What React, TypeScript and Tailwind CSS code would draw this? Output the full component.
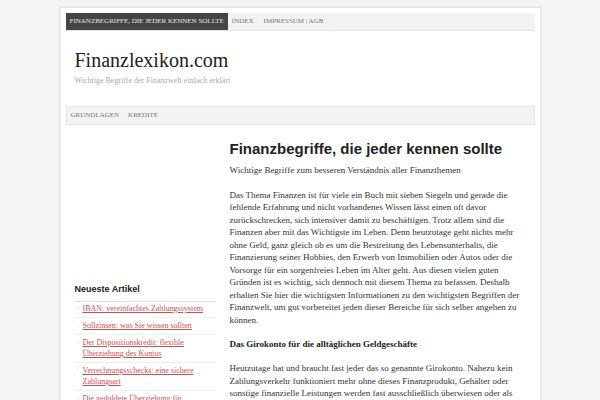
export default function App() {
  const topNav = ['Index', 'Impressum | AGB']
  const catNav = ['Grundlagen', 'Kredite']
  const articles = [
    'IBAN: vereinfachtes Zahlungssystem',
    'Sollzinsen: was Sie wissen sollten',
    'Der Dispositionskredit: flexible Überziehung des Kontos',
    'Verrechnungsschecks: eine sichere Zahlungsart',
    'Die geduldete Überziehung für Girokonten',
  ]

  return (
    <div className="min-h-[400px] bg-[#f4f4f4] pt-[6px] font-['Liberation_Serif',serif]">
      <div className="mx-auto w-[483px] border-2 border-[#e8e8e8] bg-white p-[5px]">
        {/* Top Nav */}
        <div className="flex h-[18px] items-stretch border-b border-[#e4e4e4] bg-[#f2f2f2] text-[7px] uppercase">
          <a className="flex items-center bg-[#454545] px-[4px] text-[#e6e6e6]">
            Finanzbegriffe, die jeder kennen sollte
          </a>
          <div className="flex items-center gap-[10px] pl-[4px] text-[#777]">
            {topNav.map((item) => (
              <a key={item}>{item}</a>
            ))}
          </div>
        </div>

        {/* Header */}
        <div className="h-[75px] px-[9px] pt-[17px]">
          <h1 className="text-[20px] leading-[25px] text-[#222]">Finanzlexikon.com</h1>
          <p className="mt-[2px] text-[8px] text-[#aaa]">Wichtige Begriffe der Finanzwelt einfach erklärt</p>
        </div>

        {/* Category Nav */}
        <div className="flex h-[19px] items-center border border-[#e6e6e6] bg-[#f3f3f3] px-[4px] text-[7px] uppercase text-[#777]">
          {catNav.map((item) => (
            <a key={item} className="mr-[9px]">
              {item}
            </a>
          ))}
        </div>

        <div className="flex">
          {/* Sidebar */}
          <div className="w-[155px] pl-[9px] pr-[5px] pt-[158px]">
            <h3 className="border-b border-[#ddd] pb-[4px] font-['Liberation_Sans',sans-serif] text-[9px] font-bold text-[#222]">
              Neueste Artikel
            </h3>
            <ul className="-mt-[1px] text-[8px] leading-[11px]">
              {articles.map((a) => (
                <li key={a} className="flex border-b border-[#eee] py-[2.5px] pr-[8px]">
                  <span className="w-[8px] shrink-0 pl-[2px] text-[#bbb]">·</span>
                  <a className="text-[#cc4f54] underline">{a}</a>
                </li>
              ))}
            </ul>
          </div>

          {/* Main */}
          <div className="w-[300px] pl-[9px] pt-[15px] text-[9px] leading-[12.5px] text-[#333]">
            <h2 className="font-['Liberation_Sans',sans-serif] text-[15px] font-bold leading-[18px] text-[#222]">
              Finanzbegriffe, die jeder kennen sollte
            </h2>
            <p className="mt-[6px]">Wichtige Begriffe zum besseren Verständnis aller Finanzthemen</p>
            <p className="mt-[12px]">
              Das Thema Finanzen ist für viele ein Buch mit sieben Siegeln und gerade die fehlende Erfahrung und nicht
              vorhandenes Wissen lässt einen oft davor zurückschrecken, sich intensiver damit zu beschäftigen. Trotz
              allem sind die Finanzen aber mit das Wichtigste im Leben. Denn heutzutage geht nichts mehr ohne Geld, ganz
              gleich ob es um die Bestreitung des Lebensunterhalts, die Finanzierung seiner Hobbies, den Erwerb von
              Immobilien oder Autos oder die Vorsorge für ein sorgenfreies Leben im Alter geht. Aus diesen vielen guten
              Gründen ist es wichtig, sich dennoch mit diesem Thema zu befassen. Deshalb erhalten Sie hier die
              wichtigsten Informationen zu den wichtigsten Begriffen der Finanzwelt, um gut vorbereitet jeden dieser
              Bereiche für sich selber angehen zu können.
            </p>
            <h4 className="mt-[12px] font-bold text-[#222]">Das Girokonto für die alltäglichen Geldgeschäfte</h4>
            <p className="mt-[11.5px]">
              Heutzutage hat und braucht fast jeder das so genannte Girokonto. Nahezu kein Zahlungsverkehr funktioniert
              mehr ohne dieses Finanzprodukt, Gehälter oder sonstige finanzielle Leistungen werden fast ausschließlich
              überwiesen oder als Gutschrift auf das Konto gebucht.
            </p>
          </div>
        </div>
      </div>
    </div>
  )
}
